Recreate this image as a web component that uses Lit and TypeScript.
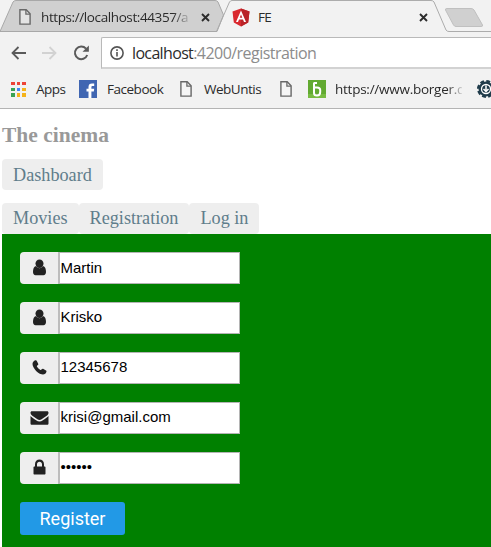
import { LitElement, html, css, svg } from "lit";
import { customElement } from "lit/decorators.js";

const person = svg`<path d="M7.5-.6C9.9-.6 11.5 1.2 11.5 3.5C11.5 6 9.8 8 7.5 8S3.5 6 3.5 3.5C3.5 1.2 5.1-.6 7.5-.6Z"/><path d="M4 6.1C1.8 6.5 1 9.2 1 12.1C1 14.2 2 15.2 3.5 15.2H11.5C13 15.2 14 14.2 14 12.1C14 9.2 13.2 6.5 11 6.1C9.4 8.9 5.6 8.9 4 6.1Z"/>`;
const phone = svg`<path d="M3.4 .3C4 .1 4.4.2 4.7.8L6.2 3.7C6.5 4.4 6.1 4.9 5.6 5.3C5 5.8 4.7 6.1 5 6.7C5.8 8.1 6.9 9.2 8.4 10C9 10.3 9.3 9.9 9.7 9.3C10.1 8.8 10.6 8.5 11.1 8.8L14 10.4C14.6 10.7 14.6 11 14.4 11.7C14 13.5 12.7 14.5 11 14.5C9.4 14.5 6.3 13.1 4.1 10.9C1.9 8.7.5 5.6.5 4C.5 2.3 1.7.8 3.4.3Z"/>`;
const envelope = svg`<path d="M-1.5 2.8C-1.5 1.8-1 1.2-.1 1.2H15.1C16 1.2 16.5 1.8 16.5 2.7C16.5 4 15.6 5 14.7 5.7L9.6 9.3C8.2 10.3 6.8 10.3 5.4 9.3L.3 5.7C-.6 5-1.5 4-1.5 2.8ZM-1.5 6C-.8 6.8 1.4 8.4 4.1 10.3C6.5 12 8.5 12 10.9 10.3C13.6 8.4 15.8 6.8 16.5 6V13.3C16.5 14.3 16 14.8 15.1 14.8H-.1C-1 14.8-1.5 14.3-1.5 13.3Z"/>`;
const lock = svg`<path fill-rule="evenodd" d="M3 6.5V4.2C3 1.6 4.9-.4 7.5-.4S12 1.6 12 4.2V6.5H12.5C13.1 6.5 13.5 6.9 13.5 7.5V13.6C13.5 14.2 13.1 14.6 12.5 14.6H2.5C1.9 14.6 1.5 14.2 1.5 13.6V7.5C1.5 6.9 1.9 6.5 2.5 6.5ZM5 6.5H10V4.2C10 2.8 8.9 1.7 7.5 1.7S5 2.8 5 4.2Z"/>`;

const fields = [
  { icon: person, value: "Martin" },
  { icon: person, value: "Krisko" },
  { icon: phone, value: "12345678" },
  { icon: envelope, value: "krisi@gmail.com" },
  { icon: lock, value: "••••••" },
];

const page = (cls: string) => html`<svg class=${cls} width="12" height="16" viewBox="0 0 12 16">
  <path d="M.9.8H7.2L11.1 4.8V15.1H.9Z" fill="#f7f7f7" fill-opacity=".5" stroke="#686868" stroke-width="1.4"/>
  <path d="M6.9.9V5.1H11" fill="none" stroke="#686868" stroke-width="1.3"/></svg>`;

const close = (cls: string) => html`<svg class=${cls} width="9" height="9" viewBox="0 0 9 9">
  <path d="M1 1L8 8M8 1L1 8" stroke="#2c2c2c" stroke-width="1.9"/></svg>`;

@customElement("browser-chrome")
class BrowserChrome extends LitElement {
  static styles = css`
    :host { display: block; height: 109px; box-sizing: border-box; background: #f2f2f2;
      border-bottom: 1px solid #b4b4b4; font-family: "Open Sans", "Noto Sans", sans-serif;
      color: #2b2b2b; white-space: nowrap; overflow: hidden; }
    svg { display: block; flex: none; }
    .strip { display: grid; height: 37px; }
    .strip > * { grid-area: 1 / 1; }
    .tabs { display: flex; align-items: center; height: 34px; font-size: 13.5px; position: relative; }
    .tabs span, .marks span { flex: none; }
    .pageTab { margin-left: 19px; }
    .tabUrl { margin-left: 10px; width: 151px; letter-spacing: -.4px;
      -webkit-mask-image: linear-gradient(90deg, #000 132px, transparent 151px); }
    .x1 { margin-left: 9px; }
    .ng { margin-left: 22px; }
    .fe { margin-left: 8px; width: 161px; letter-spacing: -.7px; }
    .bar { display: flex; height: 32px; }
    .nav { width: 101px; display: flex; align-items: center; flex: none; }
    .back { margin-left: 11px; }
    .fwd { margin-left: 16px; }
    .reload { margin-left: 16px; }
    .omni { flex: 1; display: flex; align-items: center; box-sizing: border-box; background: #fff;
      border: 1px solid #b9b9b9; border-right: 0; border-bottom: 2px solid #d2d2d2;
      border-top-left-radius: 2px; font-size: 16px; letter-spacing: -.65px; }
    .info { margin: 0 8px; }
    .path { color: #8c8c8c; letter-spacing: -.54px; }
    .marks { display: flex; align-items: center; height: 39px; padding-top: 1px; box-sizing: border-box;
      font-size: 13.5px; letter-spacing: -.48px; }
    .apps { margin-left: 10px; }
    .t1 { margin-left: 10px; width: 43px; }
    .t2 { margin-left: 10px; width: 73px; }
    .t3 { margin-left: 12px; width: 75px; }
    .p2 { margin-left: 1px; }
    .b { margin-left: 16px; }
    .t4 { margin-left: 9px; width: 127px; letter-spacing: -.25px;
      -webkit-mask-image: linear-gradient(90deg, #000 112px, transparent 130px); }
    .gear { margin-left: 15px; }
  `;

  render() {
    return html`
      <div class="strip">
        <svg width="491" height="37" viewBox="0 0 491 37">
          <path d="M0 31.5L13 2Q14 .5 16 .5H215Q217 .5 218 2L223.5 15L217 31.5Z" fill="#d0d0d0" stroke="#a8a8a8"/>
          <path d="M216.5 31.5L229.5 2Q230.5 .5 232 .5H431Q433 .5 434 2L446 30Q447 31.5 449 31.5H491" fill="none" stroke="#acacac"/>
          <path d="M447 8.5H471Q473 8.5 474 10L482.5 25Q483 26.5 481 26.5H456Q454.5 26.5 453.5 25L445.5 10Q445 8.5 447 8.5Z" fill="#d0d0d0" stroke="#c0c0c0"/>
        </svg>
        <div class="tabs">
          ${page("pageTab")}
          <span class="tabUrl">https://localhost:44357/a</span>
          ${close("x1")}
          <svg class="ng" width="18" height="19" viewBox="0 0 18 19">
            <path d="M9 .5L17.5 3.5L16.2 14.5L9 18.5L1.8 14.5L.5 3.5Z" fill="#d9292f"/>
            <path d="M9 .5L17.5 3.5L16.2 14.5L9 18.5Z" fill="#b92328"/>
            <path fill-rule="evenodd" d="M9 2.6L14 14H12L11 11.4H7L6 14H4ZM9 6.5L7.7 9.7H10.3Z" fill="#fff"/>
          </svg>
          <span class="fe">FE</span>
          ${close("x2")}
        </div>
      </div>
      <div class="bar">
        <div class="nav">
          <svg class="back" width="15" height="14" viewBox="0 0 15 14"><path d="M15 7H1.5M7.5 1L1.5 7L7.5 13" fill="none" stroke="#5a5a5a" stroke-width="1.8"/></svg>
          <svg class="fwd" width="15" height="14" viewBox="0 0 15 14"><path d="M0 7H13.5M7.5 1L13.5 7L7.5 13" fill="none" stroke="#d2d2d2" stroke-width="1.8"/></svg>
          <svg class="reload" width="17" height="16" viewBox="0 0 17 16"><path d="M13 3.7A6.3 6.3 0 1 0 14.2 10" fill="none" stroke="#5a5a5a" stroke-width="2"/><path d="M15.9.5V6.8H9.5Z" fill="#5a5a5a"/></svg>
        </div>
        <div class="omni">
          <svg class="info" width="14" height="14" viewBox="0 0 14 14"><circle cx="7" cy="7" r="6.1" fill="none" stroke="#555" stroke-width="1.6"/><path d="M7 6V10.5M7 3.3V4.9" stroke="#555" stroke-width="1.6"/></svg>
          <span>localhost</span><span class="path">:4200/registration</span>
        </div>
      </div>
      <div class="marks">
        <svg class="apps" width="16" height="16" viewBox="0 0 16 16">
          <path d="M1 1H5V4H1ZM7 1H10V4H7ZM12 1H16V4H12Z" fill="#ed4437"/>
          <path d="M1 7H5V10H1ZM1 12H5V16H1Z" fill="#39a254"/>
          <path d="M7 7H10V10H7Z" fill="#4285f4"/>
          <path d="M12 7H16V10H12ZM7 12H10V16H7ZM12 12H16V16H12Z" fill="#f5b31b"/>
        </svg>
        <span class="t1">Apps</span>
        <svg width="18" height="18" viewBox="0 0 18 18"><path d="M0 0H18V18H0Z" fill="#4066b2"/><path d="M9.5 18V11.4H7.5V8.8H9.5V7C9.5 4.7 10.8 3.6 13 3.6H15.2V6.1H13.7C12.7 6.1 12.4 6.6 12.4 7.4V8.8H15.2L14.8 11.4H12.4V18Z" fill="#fff"/></svg>
        <span class="t2">Facebook</span>
        ${page("p")}
        <span class="t3">WebUntis</span>
        ${page("p2")}
        <svg class="b" width="18" height="18" viewBox="0 0 18 18"><path d="M0 0H18V18H0Z" fill="#62aa31"/><path d="M0 14H18V18H0Z" fill="#78bc42"/><path d="M6 2.5V13Q6 15.5 9 15.5Q12.2 15.5 12.2 12V10Q12.2 7.5 9 7.5H6M6 3H9" fill="none" stroke="#fff" stroke-width="2"/></svg>
        <span class="t4">https://www.borger.d</span>
        <svg class="gear" width="18" height="18" viewBox="0 0 18 18"><circle cx="9" cy="9" r="7.5" fill="#203c4b" stroke="#203c4b" stroke-width="3" stroke-dasharray="3.7 2.2"/><circle cx="9" cy="9" r="4.5" fill="none" stroke="#fff" stroke-width="1.3"/><path d="M9 5.5V11M6.5 9L9 11.5L11.5 9" stroke="#fff" fill="none" stroke-width="1.5"/></svg>
      </div>`;
  }
}

@customElement("app-root")
class AppRoot extends LitElement {
  static styles = css`
    :host { display: flex; flex-direction: column; width: 491px; height: 547px; overflow: hidden; background: #fff; }
    main { flex: 1; display: flex; flex-direction: column; padding-left: 2px; font-family: "Liberation Serif", serif; }
    h1 { margin: 14px 0 0; height: 24px; line-height: 24px; font-size: 21.5px; color: #999; }
    nav { display: flex; line-height: 30px; }
    .first { margin: 12px 0 13px; line-height: 32px; }
    .link { height: 31px; padding: 0 11px; border-radius: 4px; background: #eee;
      color: #607d8b; font-size: 18.2px; flex: none; white-space: nowrap; }
    form { flex: 1; background: #008000; padding: 18px 0 0 18px; display: flex; flex-direction: column;
      align-items: flex-start; gap: 18px; }
    .field { display: flex; width: 220px; height: 32px; box-sizing: border-box; }
    .icon { width: 38px; display: flex; align-items: center; justify-content: center; background: #eee;
      border-radius: 4px 0 0 4px; padding-bottom: 2px; box-sizing: border-box; }
    .icon svg { width: 15px; height: 15px; overflow: visible; fill: #222; }
    .value { flex: 1; box-sizing: border-box; background: #fff; border: 1px solid #b4b4b4; border-left: 2px solid #bdbdbd;
      font: 15px/27px "Liberation Sans", sans-serif; color: #000; padding-left: .5px; }
    .field:first-child .value { line-height: 29px; }
    button { height: 33px; width: 105px; border: 0; border-radius: 3px; padding: 0 0 1px; background: #2299e6;
      color: #fff; font: 18px Roboto, sans-serif; }
  `;

  render() {
    return html`
      <browser-chrome></browser-chrome>
      <main>
        <h1>The cinema</h1>
        <nav class="first"><span class="link">Dashboard</span></nav>
        <nav>${["Movies", "Registration", "Log in"].map((t) => html`<span class="link">${t}</span>`)}</nav>
        <form>
          ${fields.map((f) => html`<div class="field">
            <span class="icon"><svg viewBox="0 0 15 15">${f.icon}</svg></span>
            <div class="value">${f.value}</div>
          </div>`)}
          <button type="button">Register</button>
        </form>
      </main>`;
  }
}
